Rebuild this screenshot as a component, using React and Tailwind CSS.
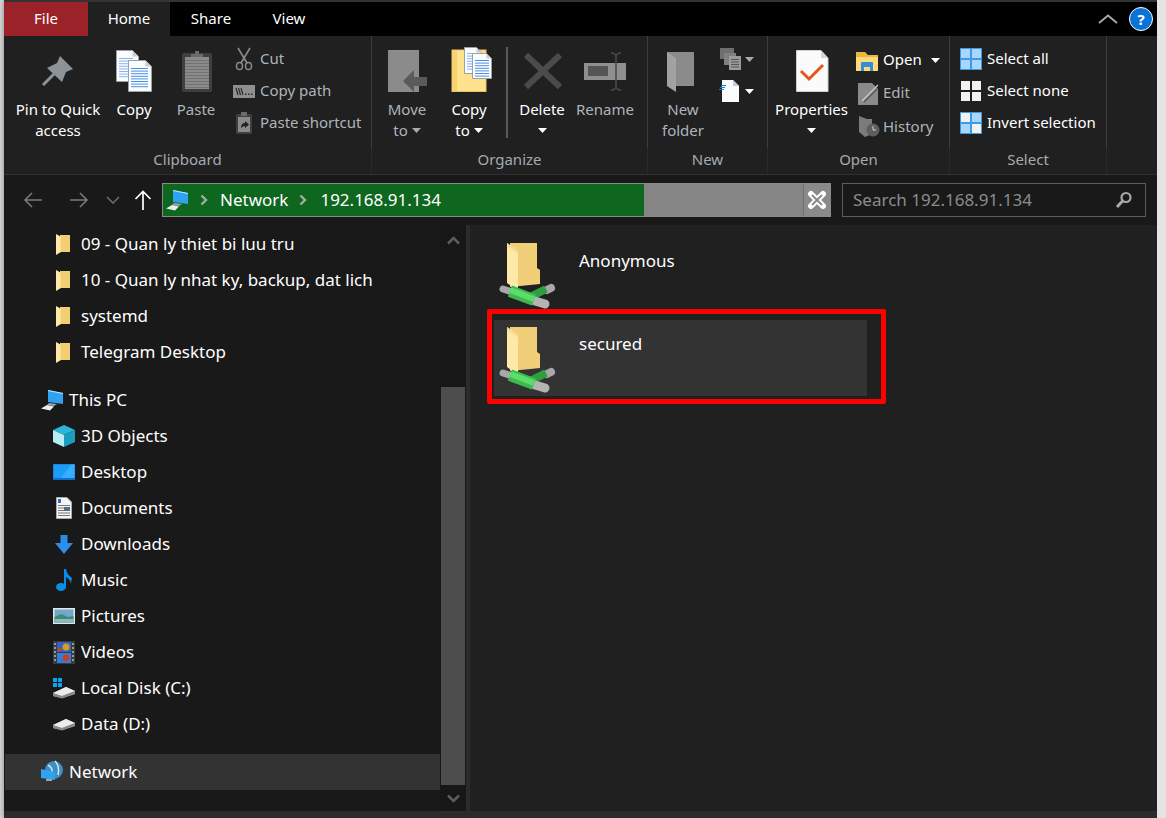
import React from "react";

const Tri = ({ c = "#fff", className = "" }) => (
  <svg width="9" height="5" viewBox="0 0 9 5" className={className}><polygon points="0,0 9,0 4.5,5" fill={c} /></svg>
);

const Lines = ({ x, y, w, n, step, c = "#5b9be0" }) => (
  <g stroke={c} strokeWidth="1">
    {Array.from({ length: n }).map((_, i) => (
      <line key={i} x1={x} x2={x + w} y1={y + i * step + 0.5} y2={y + i * step + 0.5} />
    ))}
  </g>
);

const Page = ({ x, y, w, h, fold = 6 }) => (
  <g>
    <polygon points={`${x},${y} ${x + w - fold},${y} ${x + w},${y + fold} ${x + w},${y + h} ${x},${y + h}`} fill="#fbfcfe" stroke="#9aa0a8" strokeWidth="1" />
    <polygon points={`${x + w - fold},${y} ${x + w},${y + fold} ${x + w - fold},${y + fold}`} fill="#c9ccd2" />
  </g>
);

const V = ({ vb, w, h, children, className = "" }) => (
  <svg width={w} height={h} viewBox={vb} className={"block shrink-0 overflow-visible " + className}>{children}</svg>
);

const IPin = () => (
  <V vb="38 48 40 52" w={40} h={52}>
    <polygon points="60,56 73,69 66,72 62,82 47,68 57,63" fill="#8d9499" />
    <line x1="54" y1="74" x2="43" y2="85" stroke="#8d9499" strokeWidth="3" />
  </V>
);
const ICopy = () => (
  <V vb="112 48 46 52" w={46} h={52}>
    <Page x={117.5} y={50.5} w={22} h={31} />
    <Lines x={120} y={58} w={14} n={8} step={2.6} c="#8ab4ec" />
    <Page x={129.5} y={60.5} w={23} h={31} />
    <Lines x={132} y={68} w={17} n={8} step={2.6} c="#4a90e6" />
  </V>
);
const IPaste = () => (
  <V vb="176 48 40 52" w={40} h={52}>
    <rect x="182" y="53" width="30" height="39" rx="2" fill="#3f3f3f" />
    <rect x="185" y="57" width="24" height="32" fill="#8a8a8a" />
    <Lines x={185} y={60} w={24} n={10} step={3} c="#727272" />
    <path d="M191 57 v-3 h4 v-3 h4 v3 h4 v3 z" fill="#6a6a6a" />
  </V>
);
const ICut = () => (
  <V vb="233 46 22 26" w={22} h={26}>
    <g stroke="#8a8a8a" fill="none">
      <line x1="238" y1="48" x2="247" y2="63" strokeWidth="1.6" />
      <line x1="250" y1="48" x2="241" y2="63" strokeWidth="1.6" />
      <ellipse cx="239.5" cy="66" rx="3" ry="3.6" strokeWidth="1.5" />
      <ellipse cx="248.5" cy="66" rx="3" ry="3.6" strokeWidth="1.5" />
    </g>
  </V>
);
const ICopyPath = () => (
  <V vb="233 80 22 22" w={22} h={22}>
    <rect x="233" y="85" width="22" height="13" fill="#8f8f8f" />
    <g stroke="#2c2c2c" strokeWidth="1.2">
      <line x1="236" y1="88" x2="238" y2="95" />
      <line x1="238.5" y1="88" x2="240.5" y2="95" />
      <line x1="241" y1="88" x2="243" y2="95" />
    </g>
    <g fill="#2c2c2c">
      <rect x="245" y="93.5" width="1.5" height="1.5" />
      <rect x="248" y="93.5" width="1.5" height="1.5" />
      <rect x="251" y="93.5" width="1.5" height="1.5" />
    </g>
  </V>
);
const IPasteShort = () => (
  <V vb="233 110 22 26" w={22} h={26}>
    <rect x="236" y="114" width="16" height="20" rx="1" fill="#3f3f3f" />
    <rect x="238" y="117" width="12" height="15" fill="#8a8a8a" />
    <rect x="241" y="112" width="6" height="4" fill="#6a6a6a" />
    <path d="M241 128 q0 -5 4 -5 v-2 l4 3.5 l-4 3.5 v-2 q-2 0 -4 2 z" fill="#222" />
  </V>
);
const IMove = () => (
  <V vb="388 48 46 52" w={46} h={52}>
    <rect x="392" y="50" width="31" height="42" fill="#8b8b8b" />
    <polygon points="407,81 418,70 418,77 431,77 431,86 418,86 418,92" fill="#5a5a5a" />
  </V>
);
const ICopyTo = () => (
  <V vb="448 48 46 52" w={46} h={52}>
    <rect x="454" y="50" width="34" height="41.5" fill="#ffe28d" stroke="#e9c45c" />
    <rect x="454" y="50" width="5" height="41.5" fill="#f7d26f" />
    <Page x={466.5} y={47.5} w={17} h={26} fold={5} />
    <Lines x={469} y={53} w={11} n={7} step={2.6} c="#8ab4ec" />
    <Page x={474.5} y={53.5} w={19} h={25} fold={5} />
    <Lines x={477} y={60} w={14} n={7} step={2.6} c="#4a90e6" />
  </V>
);
const IDelete = () => (
  <V vb="520 48 44 52" w={44} h={52}>
    <g stroke="#4b4b4b" strokeWidth="6">
      <line x1="526" y1="55" x2="560" y2="87" />
      <line x1="560" y1="55" x2="526" y2="87" />
    </g>
  </V>
);
const IRename = () => (
  <V vb="584 48 44 52" w={44} h={52}>
    <rect x="585" y="63" width="42" height="17" fill="#8f8f8f" />
    <rect x="589" y="66" width="20" height="10" fill="#555" />
    <path d="M612 53 q5 0 5 4 v29 q0 4 -5 4 M622 53 q-5 0 -5 4 M622 90 q-5 0 -5 -4" stroke="#4a4a4a" strokeWidth="1.6" fill="none" />
  </V>
);
const INewFolder = () => (
  <V vb="662 48 44 52" w={44} h={52}>
    <polygon points="668,52 695,52 695,86 668,86" fill="#8b8b8b" />
    <polygon points="668,52 677,58 677,92 668,86" fill="#a2a2a2" />
  </V>
);
const INewItem = () => (
  <V vb="718 46 24 26" w={24} h={26}>
    <rect x="720" y="48" width="14" height="11" fill="#6f6f6f" />
    <rect x="724" y="53" width="12" height="12" fill="#808080" />
    <rect x="729" y="56" width="12" height="14" fill="#9a9a9a" />
    <Lines x={731} y={59} w={8} n={4} step={2.5} c="#555" />
  </V>
);
const IEasy = () => (
  <V vb="718 78 24 26" w={24} h={26}>
    <polygon points="722,80 733,80 739,86 739,102 722,102" fill="#fbfcfe" />
    <polygon points="733,80 739,86 733,86" fill="#c9ccd2" />
    <g stroke="#1a7fd8" strokeWidth="1">
      <line x1="721" y1="85.5" x2="726" y2="85.5" />
      <line x1="720" y1="87.5" x2="725" y2="87.5" />
      <line x1="719" y1="89.5" x2="724" y2="89.5" />
    </g>
  </V>
);
const IProps = () => (
  <V vb="790 48 44 52" w={44} h={52}>
    <polygon points="796.5,50.5 821,50.5 828,58 828,91.5 796.5,91.5" fill="#fbfbfb" stroke="#cfcfcf" />
    <polygon points="821,50.5 828,58 821,58" fill="#d5d5d5" />
    <polyline points="801,71 809,79 823,65" fill="none" stroke="#e8541c" strokeWidth="3" />
  </V>
);
const IOpen = () => (
  <V vb="856 48 22 24" w={22} h={24}>
    <path d="M856 51 h9 l3 3 h10 v16 h-22 z" fill="#e9b93e" />
    <rect x="856" y="56" width="22" height="14" fill="#ffd978" />
    <path d="M861 70 v-8 q0 -1 1 -1 h10 q1 0 1 1 v8 h-3 v-4 h-6 v4 z" fill="#2f8fdd" />
  </V>
);
const IEdit = () => (
  <V vb="856 80 24 26" w={24} h={26}>
    <polygon points="858,82 872,82 878,88 878,104 858,104" fill="#8a8a8a" />
    <line x1="862" y1="100" x2="878" y2="84" stroke="#c9c9c9" strokeWidth="1.2" />
    <line x1="864" y1="101" x2="877" y2="88" stroke="#555" strokeWidth="1.2" />
  </V>
);
const IHistory = () => (
  <V vb="856 114 24 26" w={24} h={26}>
    <polygon points="859,116 867,119 872,119 872,134 865,137 859,132" fill="#7b7b7b" />
    <circle cx="873" cy="130" r="6.5" fill="#5f5f5f" />
    <path d="M873 126 v4 h3" stroke="#cfcfcf" strokeWidth="1" fill="none" />
  </V>
);
const Quad = ({ cells, frame }) => (
  <V vb="0 0 22 22" w={22} h={22}>
    {frame && <rect x="0" y="0" width="22" height="22" fill={frame} />}
    {[[1, 1], [12, 1], [1, 12], [12, 12]].map(([x, y], i) => (
      <rect key={i} x={x} y={y} width="9" height="9" fill={cells[i]} />
    ))}
  </V>
);
const B = "#a9d6fa";
const W = "#f2f2f2";

const Big = ({ w, icon, lines, caret, gray }) => (
  <div className={"flex flex-col items-center pt-[12px] shrink-0"} style={{ width: w }}>
    {icon}
    <div className={"flex flex-col items-center leading-[21px] -mt-[1px] " + (gray ? "text-[#aeb4ba]" : "text-white")}>
      {lines.map((l, i) => (
        <div key={i} className="flex items-center gap-[4px] whitespace-nowrap">
          {l}
          {caret === "inline" && i === lines.length - 1 && <Tri c={gray ? "#aaa" : "#fff"} />}
        </div>
      ))}
      {caret === "below" && <div className="h-[21px] flex items-center"><Tri /></div>}
    </div>
  </div>
);

const Small = ({ icon, text, gray, caret, h = "h-[32px]", gap = "gap-[5px]" }) => (
  <div className={"flex items-center whitespace-nowrap " + h + " " + gap + " " + (gray ? "text-[#aeb4ba]" : "text-white")}>
    {icon}
    <span className="-mt-[2px]">{text}</span>
    {caret && <Tri className="ml-[4px]" />}
  </div>
);

const Group = ({ w, label, children }) => (
  <div className="flex flex-col shrink-0 h-full" style={{ width: w }}>
    <div className="h-[112px] flex items-start border-r border-[#3d3d3d]">{children}</div>
    <div className="flex-1 flex items-center justify-center text-[#a3abb3] border-r border-[#2a2a2a] pb-[4px]">{label}</div>
  </div>
);

const Ribbon = () => (
  <div className="flex h-[139px] bg-[#202020] border-b border-[#303030] shrink-0 text-[15px]">
    <Group w={368} label="Clipboard">
      <div className="w-[4px] shrink-0" />
      <Big w={100} icon={<IPin />} lines={["Pin to Quick", "access"]} />
      <Big w={52} icon={<ICopy />} lines={["Copy"]} />
      <Big w={72} icon={<IPaste />} lines={["Paste"]} gray />
      <div className="pt-[7px] pl-[1px] flex flex-col">
        <Small icon={<ICut />} text="Cut" gray />
        <Small icon={<ICopyPath />} text="Copy path" gray />
        <Small icon={<IPasteShort />} text="Paste shortcut" gray />
      </div>
    </Group>
    <Group w={276} label="Organize">
      <Big w={70} icon={<IMove />} lines={["Move", "to"]} caret="inline" gray />
      <Big w={54} icon={<ICopyTo />} lines={["Copy", "to"]} caret="inline" />
      <div className="w-[2px] h-[91px] mt-[11px] ml-[10px] bg-[#5a5a5a] shrink-0" />
      <Big w={68} icon={<IDelete />} lines={["Delete"]} caret="below" />
      <Big w={58} icon={<IRename />} lines={["Rename"]} gray />
    </Group>
    <Group w={120} label="New">
      <Big w={70} icon={<INewFolder />} lines={["New", "folder"]} gray />
      <div className="pt-[7px] flex flex-col">
        <div className="h-[32px] flex items-center gap-[3px]"><INewItem /><Tri c="#aaa" /></div>
        <div className="h-[32px] flex items-center gap-[3px]"><IEasy /><Tri /></div>
      </div>
    </Group>
    <Group w={182} label="Open">
      <Big w={87} icon={<IProps />} lines={["Properties"]} caret="below" />
      <div className="pt-[8px] flex flex-col pl-[1px]">
        <Small icon={<IOpen />} text="Open" caret h="h-[33px]" />
        <Small icon={<IEdit />} text="Edit" gray h="h-[33px]" gap="gap-[3px]" />
        <Small icon={<IHistory />} text="History" gray h="h-[34px]" gap="gap-[3px]" />
      </div>
    </Group>
    <Group w={157} label="Select">
      <div className="pt-[7px] pl-[10px] flex flex-col">
        <Small icon={<Quad frame="#3a9be8" cells={[B, B, B, B]} />} text="Select all" />
        <Small icon={<Quad cells={[W, W, W, W]} />} text="Select none" />
        <Small icon={<Quad frame="#3a9be8" cells={[W, B, B, W]} />} text="Invert selection" />
      </div>
    </Group>
  </div>
);

const IPC = () => (
  <V vb="0 0 24 22" w={24} h={22}>
    <polygon points="7,1 22,4 22,15 7,13" fill="#2ea3f2" />
    <polygon points="7,1 22,4 22,5 7,2" fill="#bfe6ff" />
    <polygon points="8,14 16,15 13,17 6,16" fill="#9aa5ad" />
    <polygon points="6,16 13,17.5 9,21.5 0,19.5" fill="#e8eef2" />
  </V>
);

const NavArrow = ({ dir, c }) => (
  <V vb="0 0 20 16" w={20} h={16}>
    {dir === "l" ? (
      <path d="M19 8 H2 M9 1 L2 8 L9 15" fill="none" stroke={c} strokeWidth="1.5" />
    ) : (
      <path d="M1 8 H18 M11 1 L18 8 L11 15" fill="none" stroke={c} strokeWidth="1.5" />
    )}
  </V>
);

const Sep = () => (
  <svg width="8" height="12" viewBox="0 0 8 12" className="shrink-0"><path d="M1.5 1.5 L6 6 L1.5 10.5" fill="none" stroke="#9fb0a2" strokeWidth="2.4" /></svg>
);

const AddressRow = () => (
  <div className="h-[50px] bg-[#191919] flex items-center shrink-0 text-[17px]">
    <div className="w-[19px]" />
    <NavArrow dir="l" c="#7a7a7a" />
    <div className="w-[26px]" />
    <NavArrow dir="r" c="#7a7a7a" />
    <svg width="14" height="8" viewBox="0 0 14 8" className="ml-[17px]"><path d="M1 1 L7 7 L13 1" fill="none" stroke="#6d6d6d" strokeWidth="1.6" /></svg>
    <svg width="18" height="20" viewBox="0 0 18 20" className="ml-[14px]"><path d="M9 20 V2 M1.5 9 L9 1.5 L16.5 9" fill="none" stroke="#fff" strokeWidth="1.7" /></svg>
    <div className="ml-[10px] w-[669px] h-[34px] flex border border-[#8a8a8a] bg-[#858585]">
      <div className="w-[481px] h-full bg-[#0f661f] flex items-center pl-[3px] text-white">
        <IPC />
        <div className="w-[10px]" />
        <Sep />
        <span className="ml-[12px] -mt-[2px]">Network</span>
        <span className="ml-[11px]"><Sep /></span>
        <span className="ml-[13px] -mt-[2px]">192.168.91.134</span>
      </div>
      <div className="flex-1" />
      <div className="w-[27px] border-l border-[#6e6e6e] flex items-center justify-center bg-[#8a8a8a]">
        <svg width="20" height="20" viewBox="0 0 20 20"><g stroke="#fff" strokeWidth="6" strokeLinecap="round"><line x1="4" y1="4" x2="16" y2="16" /><line x1="16" y1="4" x2="4" y2="16" /></g><g stroke="#8a8a8a" strokeWidth="2"><line x1="5" y1="5" x2="15" y2="15" /><line x1="15" y1="5" x2="5" y2="15" /></g></svg>
      </div>
    </div>
    <div className="ml-[11px] w-[304px] h-[34px] border border-[#5c5c5c] flex items-center justify-between pl-[10px] pr-[12px] text-[#8c8c8c]">
      <span className="-mt-[2px]">Search 192.168.91.134</span>
      <svg width="18" height="18" viewBox="0 0 18 18"><circle cx="11" cy="6.5" r="4.5" fill="none" stroke="#a8a8a8" strokeWidth="2.2" /><line x1="7.5" y1="10" x2="2" y2="16" stroke="#a8a8a8" strokeWidth="3" /></svg>
    </div>
  </div>
);

const IFolderSm = () => (
  <V vb="0 0 14 21" w={14} h={21} className="-ml-[2px]">
    <polygon points="4,1 14,1 14,18 4,18" fill="#f3cf74" />
    <polygon points="0,0 5,3 5,18 0,21" fill="#ffe9a8" />
    <polygon points="0,0 5,3 5,18 4,18 4,3" fill="#f7dd92" />
  </V>
);

const Box = ({ children }) => <div className="w-[22px] h-[24px] flex items-center justify-center shrink-0">{children}</div>;

const I3D = () => (
  <V vb="0 0 22 22" w={22} h={22}>
    <polygon points="11,0 22,5 11,10 0,5" fill="#2cb5d6" />
    <polygon points="0,5 11,10 11,22 0,17" fill="#b8eef2" />
    <polygon points="22,5 11,10 11,22 22,17" fill="#1a9ebf" />
  </V>
);
const IDesk = () => (
  <V vb="0 0 22 16" w={22} h={16}>
    <rect width="22" height="16" fill="#0f6fd0" />
    <rect x="0.5" y="0.5" width="21" height="13.5" fill="#1e9bf5" />
    <polygon points="8,14 18,0.5 21.5,0.5 21.5,14" fill="#35aefc" />
  </V>
);
const IDocs = () => (
  <V vb="0 0 16 22" w={16} h={22}>
    <polygon points="0.5,0.5 11,0.5 15.5,5 15.5,21.5 0.5,21.5" fill="#f5f5f5" stroke="#aaa" />
    <rect x="2" y="2" width="3" height="4" fill="#2673c9" />
    <Lines x={2} y={8} w={12} n={5} step={2.5} c="#777" />
    <rect x="8" y="10" width="6" height="4" fill="#4a6f90" />
  </V>
);
const IDown = () => (
  <V vb="0 0 18 19" w={18} h={19}>
    <polygon points="5.5,0 12.5,0 12.5,8 18,8 9,19 0,8 5.5,8" fill="#2a8fe8" />
  </V>
);
const IMusic = () => (
  <V vb="0 0 16 22" w={16} h={22}>
    <ellipse cx="5" cy="18" rx="5" ry="4" fill="#0a8de8" />
    <path d="M8 18 V0 h2 q1 6 6 9 q-1 3 -1 6 q-1 -5 -5 -7 V18 z" fill="#0a8de8" />
  </V>
);
const IPics = () => (
  <V vb="0 0 22 16" w={22} h={16}>
    <rect width="22" height="16" fill="#e6e6e6" />
    <rect x="1.5" y="1.5" width="19" height="13" fill="#6fa8c9" />
    <polygon points="1.5,9 8,6 15,9 20.5,8 20.5,14.5 1.5,14.5" fill="#3f8a72" />
    <rect x="1.5" y="11" width="19" height="3.5" fill="#8fb8c4" />
  </V>
);
const IVid = () => (
  <V vb="0 0 22 23" w={22} h={23}>
    <rect width="22" height="23" fill="#3a3a3a" />
    <rect x="4" y="1" width="14" height="10" fill="#2f63c9" />
    <rect x="4" y="12" width="14" height="10" fill="#2f7fe0" />
    <circle cx="13" cy="6" r="3.5" fill="#d4a017" />
    <circle cx="13" cy="17" r="3.5" fill="#c8402a" />
    <rect x="5" y="7" width="4" height="3" fill="#c8402a" />
    <g fill="#999">{[2, 6, 10, 14, 18].map((y) => <rect key={y} x="1" y={y} width="2" height="2" />)}{[2, 6, 10, 14, 18].map((y) => <rect key={"r" + y} x="19" y={y} width="2" height="2" />)}</g>
  </V>
);
const Drive = () => (
  <g>
    <polygon points="0,8 13,2 22,6 22,9 9,13 0,11" fill="#b8b8b8" />
    <polygon points="0,8 13,2 22,6 9,11" fill="#ececec" />
    <polygon points="0,8 9,11 22,6 22,9 9,13.5 0,11" fill="#8a8a8a" />
  </g>
);
const ILocal = () => (
  <V vb="0 -5 22 21" w={22} h={21}>
    <g transform="translate(0,2)"><Drive /></g>
    <g fill="#08a5f0">
      <rect x="0" y="-5" width="4" height="4" />
      <rect x="5" y="-5" width="4" height="4" />
      <rect x="0" y="0" width="4" height="4" />
      <rect x="5" y="0" width="4" height="4" />
    </g>
  </V>
);
const IData = () => (
  <V vb="0 0 22 14" w={22} h={14}><Drive /></V>
);
const INet = () => (
  <V vb="0 0 22 22" w={22} h={22}>
    <circle cx="13" cy="9" r="9" fill="#3d8fc4" />
    <path d="M7 4 q5 3 4 8 M14 0 q5 5 3 14" stroke="#cfe6f5" strokeWidth="1.5" fill="none" />
    <polygon points="0,8 14,11 14,19 0,17" fill="#2ea3f2" />
    <rect x="5" y="18" width="6" height="2" fill="#9aa5ad" />
  </V>
);

const Row = ({ icon, text, top, sel }) => (
  <div className={"h-[36px] flex items-center whitespace-nowrap text-white " + (sel ? "bg-[#333333] gap-[6px] " : top ? "gap-[4px] " : "gap-[6px] ") + (top ? "pl-[36px]" : "pl-[48px]")}>
    {icon}
    <span className="-mt-[2px]">{text}</span>
  </div>
);

const Sidebar = () => (
  <div className="w-[436px] shrink-0 bg-[#191919] pl-[1px] pt-[1px] overflow-hidden text-[17px]">
    <Row icon={<Box><IFolderSm /></Box>} text="09 - Quan ly thiet bi luu tru" />
    <Row icon={<Box><IFolderSm /></Box>} text="10 - Quan ly nhat ky, backup, dat lich" />
    <Row icon={<Box><IFolderSm /></Box>} text="systemd" />
    <Row icon={<Box><IFolderSm /></Box>} text="Telegram Desktop" />
    <div className="h-[12px]" />
    <Row top icon={<IPC />} text="This PC" />
    <Row icon={<Box><I3D /></Box>} text="3D Objects" />
    <Row icon={<Box><IDesk /></Box>} text="Desktop" />
    <Row icon={<Box><IDocs /></Box>} text="Documents" />
    <Row icon={<Box><IDown /></Box>} text="Downloads" />
    <Row icon={<Box><IMusic /></Box>} text="Music" />
    <Row icon={<Box><IPics /></Box>} text="Pictures" />
    <Row icon={<Box><IVid /></Box>} text="Videos" />
    <Row icon={<Box><ILocal /></Box>} text="Local Disk (C:)" />
    <Row icon={<Box><IData /></Box>} text="Data (D:)" />
    <div className="h-[12px]" />
    <Row top sel icon={<INet />} text="Network" />
  </div>
);

const Scrollbar = () => (
  <div className="w-[26px] shrink-0 bg-[#171717] flex flex-col pl-[1px] pr-[1px]">
    <div className="h-[162px] flex justify-center pt-[11px]">
      <svg width="13" height="9" viewBox="0 0 13 9"><path d="M1 7.5 L6.5 2 L12 7.5" fill="none" stroke="#5c5c5c" strokeWidth="2.6" /></svg>
    </div>
    <div className="h-[398px] bg-[#4d4d4d]" />
    <div className="flex-1 flex justify-center pt-[9px]">
      <svg width="13" height="9" viewBox="0 0 13 9"><path d="M1 1.5 L6.5 7 L12 1.5" fill="none" stroke="#5c5c5c" strokeWidth="2.6" /></svg>
    </div>
  </div>
);

const INetFolder = () => (
  <V vb="499 242 56 66" w={56} h={66}>
    <polygon points="510,243 537,243 537,268 540,270 540,284 510,287" fill="#f1cf78" />
    <polygon points="507,243 518,251 518,291 507,283" fill="#ffe9a8" />
    <polygon points="507,243 518,251 518,254 507,246" fill="#f7dd92" />
    <line x1="503" y1="289" x2="512" y2="292" stroke="#a8a8a8" strokeWidth="7" strokeLinecap="round" />
    <line x1="547" y1="290" x2="551" y2="288" stroke="#a8a8a8" strokeWidth="8" strokeLinecap="round" />
    <line x1="532" y1="296" x2="546" y2="289" stroke="#2f9e3d" strokeWidth="8" />
    <line x1="535" y1="301" x2="545" y2="304" stroke="#b4b4b4" strokeWidth="9" strokeLinecap="round" />
    <line x1="510" y1="291" x2="534" y2="300" stroke="#3fb94f" strokeWidth="12" />
    <line x1="510" y1="290" x2="534" y2="299" stroke="#5bdc6b" strokeWidth="6" />
  </V>
);

const Share = ({ name, sel, children }) => (
  <div className={"relative w-[373px] h-[76px] flex items-start pl-[5px] pt-[6px] gap-[24px] text-white " + (sel ? "bg-[#333333]" : "")}>
    <INetFolder />
    <span className={sel ? "mt-[7px]" : "mt-[8px]"}>{name}</span>
    {children}
  </div>
);

const Main = () => (
  <div className="flex-1 bg-[#202020] pl-[24px] pt-[11px] flex flex-col gap-[8px] text-[17px]">
    <Share name="Anonymous" />
    <Share name="secured" sel>
      <div className="absolute left-[-7px] top-[-11px] w-[399px] h-[95px] border-[5px] border-[#ff0000] rounded-[2px]" />
    </Share>
  </div>
);

export default function App() {
  return (
    <div
      className="w-[1166px] h-[818px] flex overflow-hidden bg-[#f0f0f0] text-[15px] leading-[21px]"
      style={{ fontFamily: '"Noto Sans", "Open Sans", sans-serif' }}
    >
      <div className="w-[4px] h-full bg-[#d8d8d8] shrink-0" />
      <div className="w-[1153px] h-full flex flex-col shrink-0 bg-[#202020] shadow-[0_0_6px_rgba(0,0,0,0.4)]">
        <div className="h-[2px] bg-[#333333] shrink-0" />
        <div className="h-[34px] bg-black flex items-center shrink-0 text-white">
          <div className="w-[84px] h-full pb-[2px] bg-[#9c2229] flex items-center justify-center">File</div>
          <div className="w-[82px] h-full pb-[2px] bg-[#202020] flex items-center justify-center">Home</div>
          <div className="w-[82px] h-full pb-[2px] flex items-center justify-center">Share</div>
          <div className="w-[74px] h-full pb-[2px] flex items-center justify-center">View</div>
          <div className="flex-1" />
          <svg width="20" height="10" viewBox="0 0 20 10"><path d="M1 9 L10 1.5 L19 9" fill="none" stroke="#ababab" strokeWidth="1.8" /></svg>
          <div className="ml-[11px] mr-[4px] w-[24px] h-[24px] rounded-full bg-[#0a74d6] border border-white flex items-center justify-center font-bold text-[15px]">?</div>
        </div>
        <Ribbon />
        <AddressRow />
        <div className="flex-1 min-h-0 flex">
          <Sidebar />
          <Scrollbar />
          <div className="w-[4px] shrink-0 bg-[#2b2b2b]" />
          <Main />
        </div>
        <div className="h-[7px] bg-[#2b2b2b] shrink-0" />
      </div>
      <div className="flex-1 h-full bg-[#e4e4e4]" />
    </div>
  );
}
